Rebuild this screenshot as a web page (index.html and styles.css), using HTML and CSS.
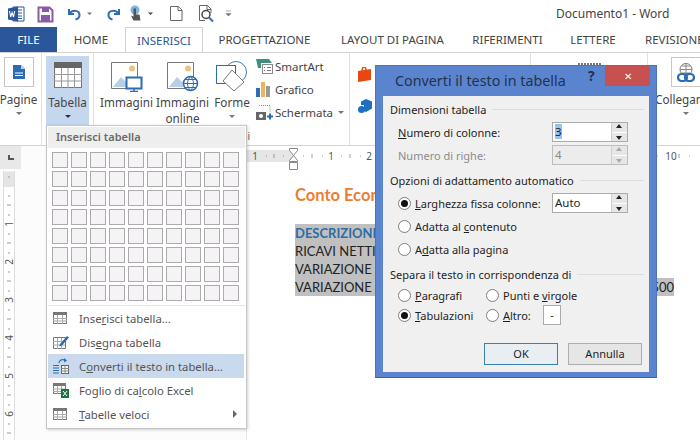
FILE: index.html
```html
<!DOCTYPE html>
<html lang="it">
<head>
<meta charset="utf-8">
<title>Documento1 - Word</title>
<link rel="stylesheet" href="styles.css">
</head>
<body>
<div class="app">
  <header class="titlebar">
    <svg class="qat" width="240" height="27" viewBox="0 0 240 27">
      <path d="M13 7h11v14H13z" fill="#fff" stroke="#2b579a"/><path d="M16 10h6M16 13h6M16 16h6M16 18.500h6" stroke="#2b579a"/>
      <path d="M8 8.500l10-2v15l-10-2z" fill="#2b579a"/><path d="M9.500 11l1.200 6 1.400-4.500 1.400 4.500 1.200-6" fill="none" stroke="#fff" stroke-width="1.100"/>
      <path d="M38.500 7.500h11l3 3v11h-14z" fill="none" stroke="#8a5ba5" stroke-width="2"/><rect x="42" y="8" width="7" height="4" fill="#8a5ba5"/><rect x="41" y="15" width="9" height="6" fill="#8a5ba5"/>
      <path d="M69 9v5h5" fill="none" stroke="#2f6db5" stroke-width="2"/><path d="M69.500 13.500c3-4 10-3.500 10 1.500 0 3-2 4-4 4.500" fill="none" stroke="#2f6db5" stroke-width="2"/>
      <path d="M87 12.500h5l-2.500 2.500z" fill="#777"/>
      <path d="M119 9v5h-5" fill="none" stroke="#2f6db5" stroke-width="2"/><path d="M118.500 13.500c-3-4-10-3.500-10 1.500 0 3 2 4 4 4.500" fill="none" stroke="#2f6db5" stroke-width="2"/>
      <circle cx="135" cy="10" r="4.500" fill="#7fb2dc"/><path d="M133.500 8.500h2.500v6h3.500l1 6h-7l-2.500-5 2.500 1z" fill="#555"/>
      <path d="M148 12.500h5l-2.500 2.500z" fill="#444"/>
      <path d="M170.500 6.500h8l3.500 3.500v10.500h-11.500zM178 6.500v4h4" fill="#fff" stroke="#666"/>
      <path d="M199.500 5.500h8l3.500 3.500v4M205 20.500h-5.500V5.500M207 5.500v4h4" fill="none" stroke="#666"/><circle cx="206" cy="14.500" r="4" fill="#fff" stroke="#444" stroke-width="1.500"/><path d="M209 17.500l4 4" stroke="#2f6db5" stroke-width="2"/>
      <path d="M226 11h5M226 13.500h5l-2.500 2.500z" fill="#777" stroke="#777" stroke-width=".6"/>
    </svg>
    <span class="doc-title">Documento1 - Word</span>
  </header>

  <nav class="tabs">
    <span class="tab tab-file">FILE</span>
    <span class="tab">HOME</span>
    <span class="tab tab-active">INSERISCI</span>
    <span class="tab">PROGETTAZIONE</span>
    <span class="tab">LAYOUT DI PAGINA</span>
    <span class="tab">RIFERIMENTI</span>
    <span class="tab">LETTERE</span>
    <span class="tab tab-last">REVISIONE</span>
  </nav>

  <section class="ribbon">
    <div class="group group-pages">
      <div class="big big-pages">
        <span class="boxed-icon">
          <svg width="12" height="14" viewBox="0 0 12 14"><path d="M0 0h8l4 4v10H0z" fill="#2b6cb3"/><path d="M2 8h8M2 10.500h8" stroke="#fff"/><path d="M8 0v4h4z" fill="#bcd3ea"/></svg>
        </span>
        <span class="big-label">Pagine</span>
        <span class="caret"></span>
      </div>
    </div>
    <div class="group group-table">
      <div class="big big-table">
        <svg class="table-icon" width="28" height="26" viewBox="0 0 28 26"><rect x=".5" y=".5" width="27" height="25" fill="#fff" stroke="#777"/><rect width="28" height="6" fill="#666"/><path d="M0 12.500h28M0 19h28M7.500 6v20M14 6v20M20.500 6v20" stroke="#999"/></svg>
        <span class="big-label">Tabella</span>
        <span class="caret caret-dark"></span>
      </div>
    </div>
    <div class="group group-illus">
      <div class="illus-row">
        <div class="big big-img">
          <svg width="32" height="31" viewBox="0 0 32 31"><path d="M.5 1.500h26v26H.5z" fill="#fff" stroke="#777"/><circle cx="21" cy="7.500" r="3" fill="#edc27e"/><path d="M2 26l8-10 5 5 3-2v7z" fill="#b9cfe6"/><rect x="15.500" y="16.500" width="15" height="11" fill="#fff" stroke="#2b6cb3" stroke-width="2"/><path d="M19 30.500h8M23 28v2" stroke="#2b6cb3" stroke-width="1.500"/></svg>
          <span class="big-label">Immagini</span>
        </div>
        <div class="big big-img2">
          <svg width="32" height="31" viewBox="0 0 32 31"><path d="M.5 1.500h26v26H.5z" fill="#fff" stroke="#777"/><circle cx="21" cy="7.500" r="3" fill="#edc27e"/><path d="M2 26l8-10 5 5 3-2v7z" fill="#b9cfe6"/><circle cx="23.500" cy="22.500" r="7" fill="#fff" stroke="#2b6cb3" stroke-width="1.500"/><path d="M16.500 22.500h14M18 18.500h11M18 26.500h11M23.500 15.500c-4 4-4 10 0 14 4-4 4-10 0-14" fill="none" stroke="#2b6cb3"/></svg>
          <span class="big-label">Immagini<br>online</span>
        </div>
        <div class="big big-shapes">
          <svg width="32" height="31" viewBox="0 0 32 31"><circle cx="20" cy="11" r="10.500" fill="#fff" stroke="#3f7cb9"/><rect x=".5" y="4.500" width="19" height="18" fill="#fff" stroke="#2b6cb3"/><path d="M16 9l12 12-10 9-11-10z" fill="#fff" stroke="#777"/></svg>
          <span class="big-label">Forme</span>
          <span class="caret"></span>
        </div>
        <ul class="small-list">
          <li class="small-item">
            <svg width="17" height="15" viewBox="0 0 17 15"><path d="M0 0h13l3 4H5v5H2z" fill="#3f8f7e"/><rect x="6.500" y="5.500" width="10" height="9" fill="#fff" stroke="#888"/><path d="M8 8.500h1M11 8.500h4M8 11.500h1M11 11.500h4" stroke="#777"/></svg>
            <span>SmartArt</span>
          </li>
          <li class="small-item">
            <svg width="17" height="15" viewBox="0 0 17 15"><rect y="6" width="4" height="9" fill="#2b6cb3"/><rect x="5" width="4" height="15" fill="#edb45c"/><rect x="10" y="4" width="4" height="11" fill="#999"/></svg>
            <span>Grafico</span>
          </li>
          <li class="small-item">
            <svg width="17" height="15" viewBox="0 0 17 15"><path d="M3 .5h11v7" fill="none" stroke="#888" stroke-dasharray="1 1"/><rect y="7" width="10" height="8" fill="#666"/><circle cx="5" cy="11" r="2" fill="#fff"/><path d="M11 11.500h6M14 8.500v6" stroke="#2b6cb3" stroke-width="2"/></svg>
            <span>Schermata</span>
            <span class="caret caret-inline"></span>
          </li>
        </ul>
      </div>
      <span class="group-label">Illustrazioni</span>
    </div>
    <div class="group group-apps">
      <svg width="15" height="16" viewBox="0 0 15 16"><path d="M0 4l13-2v11l-13 2z" fill="#e8470f"/><path d="M4 4c0-5 4-5 4-1" fill="none" stroke="#e8470f" stroke-width="1.500"/></svg>
      <svg width="15" height="15" viewBox="0 0 15 15"><path d="M8 0l6 2.500v7L8 13 6 12V6H3V2.500z" fill="#1f6fc0"/><circle cx="3.500" cy="10.500" r="3.500" fill="#1f6fc0"/></svg>
    </div>
    <div class="group group-media">
      <svg width="24" height="3" viewBox="0 0 24 3"><path d="M0 1.500h24" stroke="#777" stroke-width="3" stroke-dasharray="2 1"/></svg>
    </div>
    <div class="group group-links">
      <div class="big big-links">
        <span class="boxed-icon">
          <svg width="18" height="19" viewBox="0 0 18 19"><circle cx="9" cy="6.500" r="6" fill="#fff" stroke="#777"/><path d="M3 6.500h12M9 .5v12M5 3h8M5 10h8" stroke="#888"/><rect x="1" y="11" width="9" height="7" rx="3.500" fill="none" stroke="#2b6cb3" stroke-width="2.200"/><rect x="8" y="11" width="9" height="7" rx="3.500" fill="none" stroke="#2b6cb3" stroke-width="2.200"/></svg>
        </span>
        <span class="big-label links-label">Collegamenti</span>
        <span class="caret links-caret"></span>
      </div>
    </div>
  </section>

  <main class="workspace">
    <aside class="side">
      <div class="corner"><span class="corner-mark"></span></div>
      <svg class="vruler" width="12" height="272" viewBox="0 0 12 272">
        <rect x=".5" y="0" width="11" height="272" fill="#fff" stroke="#ddd"/>
        <rect x="1" y="1" width="10" height="15" fill="#e4e4e4"/>
        <path d="M5 6h2M5 25h2M4 34h4M5 44h2M5 63h2M4 72h4M5 82h2M5 101h2M4 110h4M5 120h2M5 139h2M4 148h4M5 158h2M5 177h2M4 186h4M5 196h2M5 215h2M4 224h4M5 234h2M5 253h2M4 262h4" stroke="#999"/>
        <g class="ruler-text">
          <text transform="translate(10 53) rotate(-90)" text-anchor="middle">1</text>
          <text transform="translate(10 91) rotate(-90)" text-anchor="middle">2</text>
          <text transform="translate(10 129) rotate(-90)" text-anchor="middle">3</text>
          <text transform="translate(10 167) rotate(-90)" text-anchor="middle">4</text>
          <text transform="translate(10 205) rotate(-90)" text-anchor="middle">5</text>
          <text transform="translate(10 243) rotate(-90)" text-anchor="middle">6</text>
        </g>
      </svg>
    </aside>
    <div class="document">
      <svg class="hruler" width="453" height="30" viewBox="0 0 453 30">
        <rect x="0" y="4" width="453" height="12" fill="#fff"/>
        <rect x="0" y="4" width="46" height="12" fill="#e6e6e6"/>
        <path d="M19 10h1M27 8v4M36 10h1M56 10h1M65 8v4M75 10h1M94 10h1M103 8v4M113 10h1M132 10h1M141 8v4M151 10h1M410 10h1M432 8v4M442 10h1" stroke="#999"/>
        <g class="ruler-text" text-anchor="middle">
          <text x="8" y="14">1</text><text x="84" y="14">1</text><text x="122" y="14">2</text><text x="424" y="14">10</text>
        </g>
        <path d="M42.500 2.500h8v2l-4 5 4 5v1h-8v-1l4-5-4-5zM42.500 16.500h8v7h-8z" fill="#fff" stroke="#888"/>
      </svg>
      <article class="page">
        <h1 class="doc-heading">Conto Economico</h1>
        <p class="sel sel-head">DESCRIZIONE</p>
        <p class="sel">RICAVI NETTI</p>
        <p class="sel">VARIAZIONE E</p>
        <p class="sel sel-wide"><span>VARIAZIONE D</span><span>500</span></p>
      </article>
    </div>
  </main>

  <div class="menu">
    <div class="menu-head">Inserisci tabella</div>
    <div class="cells">
      <i></i><i></i><i></i><i></i><i></i><i></i><i></i><i></i><i></i><i></i>
      <i></i><i></i><i></i><i></i><i></i><i></i><i></i><i></i><i></i><i></i>
      <i></i><i></i><i></i><i></i><i></i><i></i><i></i><i></i><i></i><i></i>
      <i></i><i></i><i></i><i></i><i></i><i></i><i></i><i></i><i></i><i></i>
      <i></i><i></i><i></i><i></i><i></i><i></i><i></i><i></i><i></i><i></i>
      <i></i><i></i><i></i><i></i><i></i><i></i><i></i><i></i><i></i><i></i>
      <i></i><i></i><i></i><i></i><i></i><i></i><i></i><i></i><i></i><i></i>
      <i></i><i></i><i></i><i></i><i></i><i></i><i></i><i></i><i></i><i></i>
    </div>
    <div class="menu-item">
      <svg width="14" height="12" viewBox="0 0 14 12"><rect x=".5" y=".5" width="13" height="11" fill="#fff" stroke="#777"/><rect width="14" height="3" fill="#777"/><path d="M0 6.500h14M0 9h14M4.500 3v9M9.500 3v9" stroke="#aaa"/></svg>
      <span>Inse<u>r</u>isci tabella...</span>
    </div>
    <div class="menu-item">
      <svg width="16" height="14" viewBox="0 0 16 14"><path d="M.5 2.500h12v11H.5z" fill="#fff" stroke="#777"/><path d="M0 6.500h12M0 10h12M4.500 3v11M8.500 3v11" stroke="#aaa"/><path d="M7 9l7-8 2 1.500-7 8-3 1z" fill="#2b6cb3"/></svg>
      <span>Dis<u>e</u>gna tabella</span>
    </div>
    <div class="menu-item menu-item-on">
      <svg width="16" height="16" viewBox="0 0 16 16"><path d="M0 7.500h6M0 10h6M0 12.500h6M0 15h6" stroke="#2b6cb3"/><path d="M6 5c0-3 3-4 6-3" fill="none" stroke="#2b6cb3" stroke-width="1.200"/><path d="M11 0l3 2.500-3 2z" fill="#2b6cb3"/><rect x="8.500" y="7.500" width="7" height="8" fill="#fff" stroke="#666"/><path d="M8 10.500h8M8 13h8M12 8v8" stroke="#888"/></svg>
      <span>C<u>o</u>nverti il testo in tabella...</span>
    </div>
    <div class="menu-item">
      <svg width="16" height="15" viewBox="0 0 16 15"><rect x=".5" y=".5" width="12" height="10" fill="#fff" stroke="#777"/><rect width="13" height="3" fill="#777"/><path d="M0 6h12M0 8.500h12M4.500 3v8M8.500 3v8" stroke="#aaa"/><rect x="8" y="6" width="8" height="9" fill="#1e7145"/><path d="M10 8l4 5M14 8l-4 5" stroke="#fff"/></svg>
      <span>Foglio di ca<u>l</u>colo Excel</span>
    </div>
    <div class="menu-item">
      <svg width="14" height="12" viewBox="0 0 14 12"><rect x=".5" y=".5" width="13" height="11" fill="#fff" stroke="#777"/><rect width="14" height="3" fill="#777"/><path d="M0 6.500h14M0 9h14M4.500 3v9M9.500 3v9" stroke="#aaa"/></svg>
      <span><u>T</u>abelle veloci</span>
      <b class="submenu"></b>
    </div>
  </div>

  <div class="dialog">
    <div class="dlg-title">
      <span class="dlg-caption">Converti il testo in tabella</span>
      <span class="dlg-help">?</span>
      <span class="dlg-close">✕</span>
    </div>
    <form class="dlg-body">
      <div class="legend"><span>Dimensioni tabella</span></div>
      <div class="row">
        <label class="lbl"><u>N</u>umero di colonne:</label>
        <div class="spin"><span class="val"><span class="selected">3</span></span><span class="btns"><b class="up"></b><b class="down"></b></span></div>
      </div>
      <div class="row">
        <label class="lbl lbl-off">Numero di righe:</label>
        <div class="spin spin-off"><span class="val">4</span><span class="btns"><b class="up"></b><b class="down"></b></span></div>
      </div>
      <div class="legend legend-gap"><span>Opzioni di adattamento automatico</span></div>
      <div class="row">
        <label class="radio radio-long"><i class="dot dot-on"></i><span><u>L</u>arghezza fissa colonne:</span></label>
        <div class="spin"><span class="val">Auto</span><span class="btns"><b class="up"></b><b class="down"></b></span></div>
      </div>
      <div class="row"><label class="radio"><i class="dot"></i><span>Adatta al <u>c</u>ontenuto</span></label></div>
      <div class="row"><label class="radio"><i class="dot"></i><span>A<u>d</u>atta alla pagina</span></label></div>
      <div class="legend legend-gap legend-last"><span>Separa il testo in corrispondenza di</span></div>
      <div class="row row-tight">
        <label class="radio radio-col"><i class="dot"></i><span><u>P</u>aragrafi</span></label>
        <label class="radio"><i class="dot"></i><span>Punti e <u>v</u>irgole</span></label>
      </div>
      <div class="row row-tight">
        <label class="radio radio-col"><i class="dot dot-on"></i><span><u>T</u>abulazioni</span></label>
        <label class="radio radio-other"><i class="dot"></i><span><u>A</u>ltro:</span></label>
        <span class="other-box">-</span>
      </div>
      <div class="actions">
        <span class="btn btn-default">OK</span>
        <span class="btn">Annulla</span>
      </div>
    </form>
  </div>
</div>
</body>
</html>
```
FILE: styles.css
```css
* { box-sizing: border-box; }
html, body { margin: 0; padding: 0; }
body { background: #fff; }
.app {
  position: relative;
  display: flex;
  flex-direction: column;
  width: 700px;
  height: 440px;
  overflow: hidden;
  background: #fff;
  color: #444;
  font: 12px "Noto Sans", "Open Sans", sans-serif;
}

/* title bar */
.titlebar { display: flex; align-items: flex-start; flex: 0 0 27px; }
.qat { display: block; flex: 0 0 240px; }
.doc-title { margin: 5px 0 0 316px; white-space: nowrap; color: #444; font-size: 12px; }

/* tabs */
.tabs {
  display: grid;
  grid-template-columns: 57px 68px 78px 123px 133px 97px 74px 1fr;
  flex: 0 0 25px;
  border-bottom: 1px solid #d2d2d2;
  line-height: 25px;
  font-size: 11.5px;
  color: #444;
}
.tab { text-align: center; white-space: nowrap; }
.tab-file { background: #2b579a; color: #fff; height: 25px; }
.tab-active {
  height: 25px;
  background: #fff;
  color: #2b579a;
  border: 1px solid #d2d2d2;
  border-bottom: 0;
}
.tab-last { text-align: left; padding-left: 15px; }

/* ribbon */
.ribbon { display: flex; flex: 0 0 93px; border-bottom: 1px solid #d4d4d4; }
.group { position: relative; display: flex; flex-direction: column; height: 100%; border-right: 1px solid #e1e1e1; }
.group-pages { flex: 0 0 42px; }
.group-table { flex: 0 0 52px; }
.group-illus { flex: 0 0 256px; }
.group-apps { flex: 0 0 181px; gap: 16px; padding: 14px 0 0 8px; }
.group-media { flex: 0 0 117px; padding: 10px 0 0 47px; }
.group-links { flex: 1; border-right: 0; }
.big { display: flex; flex-direction: column; align-items: center; font-size: 11.7px; color: #444; }
.big-label { display: block; line-height: 16px; text-align: center; white-space: nowrap; }
.big-pages { width: 37px; padding-top: 4px; }
.boxed-icon {
  display: flex;
  align-items: center;
  justify-content: center;
  flex: 0 0 30px;
  width: 30px;
  height: 30px;
  margin-bottom: 4px;
  border: 1px solid #c6c6c6;
}
.big-table { width: 43px; height: 72px; margin: 3px 0 0 4px; padding-top: 6px; background: #c5d7ee; }
.table-icon { margin-bottom: 6px; }
.caret { width: 0; height: 0; margin-top: 5px; border: 3px solid transparent; border-top: 3px solid #777; border-bottom: 0; }
.caret-dark { border-top-color: #333; }
.caret-inline { margin: 0 0 0 3px; }
.illus-row { display: flex; flex: 1; align-items: flex-start; padding: 8px 0 0 7px; }
.big-img { width: 51px; margin-right: 5px; }
.big-img2 { width: 51px; margin-right: 7px; }
.big-shapes { width: 34px; margin-right: 7px; }
.big-img svg, .big-img2 svg, .big-shapes svg { margin-bottom: 2px; }
.small-list { margin: -6px 0 0; padding: 0; list-style: none; }
.small-item { display: flex; align-items: center; gap: 2px; height: 23px; white-space: nowrap; font-size: 11.5px; }
.group-label { display: block; height: 14px; margin-bottom: 2px; text-align: center; font-size: 10.500px; line-height: 14px; color: #666; }
.big-links { align-items: flex-start; padding-top: 4px; }
.big-links .boxed-icon { margin-left: 23px; }
.links-label { margin-left: 7px; }
.links-caret { margin-left: 35px; }

/* workspace */
.workspace { display: flex; flex: 1; min-height: 0; }
.side { flex: 0 0 247px; background: #fcfcfc; border-right: 1px solid #e6e6e6; }
.corner { display: flex; width: 21px; height: 23px; background: #e8e8e8; align-items: center; justify-content: center; }
.corner-mark { width: 6px; height: 5px; border-left: 2px solid #555; border-bottom: 2px solid #555; }
.vruler { display: block; margin: 2px 0 0 3px; }
.ruler-text { font: 10px "Noto Sans", sans-serif; fill: #555; }
.document { flex: 1; min-width: 0; }
.hruler { display: block; margin-bottom: -5px; }
.page { padding: 13px 0 0 48px; font: 13px/18px Lato, "Liberation Sans", sans-serif; color: #222; }
.doc-heading { margin: 0 0 18px; font: bold 16.5px/22px Lato, "Liberation Sans", sans-serif; color: #ed7d31; white-space: nowrap; }
.sel { width: 120px; height: 18px; margin: 0; background: #c0c0c0; white-space: nowrap; }
.sel-head { font-weight: bold; color: #2e6ca4; }
.sel-wide { display: flex; justify-content: space-between; width: 379px; }

/* dropdown menu */
.menu {
  position: absolute;
  left: 46px;
  top: 125px;
  width: 201px;
  height: 304px;
  padding: 1px;
  background: #fff;
  border: 1px solid #c6c6c6;
  box-shadow: 1px 1px 3px rgba(0, 0, 0, .18);
}
.menu-head { height: 21px; padding-left: 8px; background: #eee; color: #6a6a6a; font-size: 11px; font-weight: 600; line-height: 20px; }
.cells {
  display: grid;
  grid-template-columns: repeat(10, 16px);
  grid-auto-rows: 16px;
  gap: 3px;
  height: 158px;
  padding: 4px 0 0 4px;
  border-bottom: 1px solid #e4e4e4;
}
.cells i { display: block; background: #f6f3f6; border: 1px solid #ababab; }
.menu-item { position: relative; display: flex; align-items: center; height: 24px; padding-left: 5px; font-size: 11.3px; color: #555; }
.menu-item svg { flex: 0 0 auto; margin-right: 10px; }
.menu-item > span { position: absolute; left: 31px; white-space: nowrap; }
.menu-item-on { background: #c9d9ee; margin-right: 1px; }
.submenu { position: absolute; right: 8px; top: 8px; border: 4px solid transparent; border-left: 4px solid #666; border-right: 0; }

/* dialog */
.dialog {
  position: absolute;
  left: 375px;
  top: 65px;
  width: 282px;
  height: 313px;
  padding: 0 7px 5px;
  background: #5b84ce;
  border: 1px solid #4d73b8;
  border-bottom-color: #44619b;
  display: flex;
  flex-direction: column;
}
.dlg-title { position: relative; flex: 0 0 30px; }
.dlg-caption { position: absolute; left: 12px; top: 3px; font-size: 14.3px; color: #22324f; white-space: nowrap; line-height: 24px; }
.dlg-help { position: absolute; left: 205px; top: 0; font-size: 14px; font-weight: bold; color: #22324f; }
.dlg-close {
  position: absolute;
  left: 222px;
  top: 0;
  width: 45px;
  height: 20px;
  background: #c75050;
  color: #fff;
  text-align: center;
  font-size: 10px;
  line-height: 20px;
}
.dlg-body { flex: 1; display: flex; flex-direction: column; padding-top: 3px; background: #f0f0f0; color: #1e1e1e; font-size: 11px; }
.legend { display: flex; align-items: center; gap: 6px; height: 20px; margin: 0 5px 3px 7px; white-space: nowrap; }
.legend::after { content: ""; flex: 1; height: 1px; background: #dcdcdc; }
.legend-gap { margin-top: 2px; }
.legend-last { margin-bottom: 1px; }
.row { display: flex; align-items: center; height: 20px; margin-bottom: 3px; padding-left: 15px; }
.row-tight { margin-bottom: 0; }
.lbl { flex: 0 0 154px; white-space: nowrap; }
.lbl-off { color: #8c8c8c; }
.spin { display: flex; width: 76px; height: 20px; background: #fff; border: 1px solid #ababab; }
.val { flex: 1; padding-left: 2px; line-height: 17px; font-size: 11.5px; }
.selected { display: inline-block; height: 15px; margin-top: 1px; background: #99c4ee; line-height: 15px; }
.btns { display: flex; flex: 0 0 16px; flex-direction: column; gap: 1px; border-left: 1px solid #cfcfcf; background: #fff; }
.btns b { position: relative; flex: 1; background: #e6e6e6; }
.btns b::after { content: ""; position: absolute; left: 4px; border: 3px solid transparent; }
.up::after { top: 1px; border-bottom: 4px solid #222 !important; border-top: 0 !important; }
.down::after { top: 3px; border-top: 4px solid #222 !important; border-bottom: 0 !important; }
.spin-off { background: #ececec; color: #888; border-color: #bdbdbd; }
.spin-off .up::after { border-bottom-color: #aaa !important; }
.spin-off .down::after { border-top-color: #aaa !important; }
.radio { display: flex; align-items: center; gap: 4px; white-space: nowrap; }
.radio-long { flex: 0 0 154px; }
.radio-col { flex: 0 0 88px; }
.radio-other { flex: 0 0 57px; }
.dot { position: relative; display: block; flex: 0 0 13px; width: 13px; height: 13px; background: #fff; border: 1px solid #7f7f7f; border-radius: 50%; }
.dot-on::after { content: ""; position: absolute; left: 2px; top: 2px; width: 7px; height: 7px; background: #111; border-radius: 50%; }
.other-box { width: 18px; height: 20px; background: #fff; border: 1px solid #ababab; text-align: center; line-height: 18px; }
.actions { display: flex; justify-content: flex-end; gap: 10px; margin-top: 18px; padding-right: 7px; }
.btn { width: 74px; height: 22px; background: #e6e6e6; border: 1px solid #adadad; text-align: center; line-height: 20px; }
.btn-default { border-color: #3c7fb1; background: #e9eef3; }
```
